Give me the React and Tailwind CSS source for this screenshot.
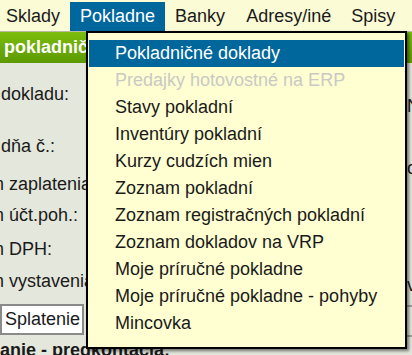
import React from 'react';

const topMenu = [
  { label: 'Sklady', cls: 'ml-[6px] mr-[10px]' },
  { label: 'Pokladne', cls: 'px-[10px] bg-[#00679c] text-white', active: true },
  { label: 'Banky', cls: 'ml-[10px]' },
  { label: 'Adresy/iné', cls: 'ml-[21px]' },
  { label: 'Spisy', cls: 'ml-[20px]' },
];

const dropItems = [
  { label: 'Pokladničné doklady', active: true },
  { label: 'Predajky hotovostné na ERP', disabled: true },
  { label: 'Stavy pokladní' },
  { label: 'Inventúry pokladní' },
  { label: 'Kurzy cudzích mien' },
  { label: 'Zoznam pokladní' },
  { label: 'Zoznam registračných pokladní' },
  { label: 'Zoznam dokladov na VRP' },
  { label: 'Moje príručné pokladne' },
  { label: 'Moje príručné pokladne - pohyby' },
  { label: 'Mincovka' },
];

const FormRow = ({ label, shift, right, rightShift, h }) => (
  <div className={`flex items-center justify-between ${h}`}>
    <span className={`whitespace-nowrap ${shift}`}>{label}</span>
    <span className={`relative w-[5px] overflow-hidden whitespace-nowrap ${rightShift || ''}`}>{right}</span>
  </div>
);

const App = () => {
  return (
    <div className="relative w-[412px] h-[355px] overflow-hidden bg-[#e4e7dc] text-[18px] text-[#1a1a1a] font-['Liberation_Sans',Arial,sans-serif]">
      {/* top menu */}
      <div className="flex h-[32px] items-stretch bg-[#fbfbd6] border-b border-[#b9b9a6] pt-[2px]">
        {topMenu.map((item) => (
          <div key={item.label} className={`flex items-center ${item.cls}`}>
            {item.label}
          </div>
        ))}
      </div>

      {/* green title bar */}
      <div className="h-[31px] flex items-center pl-[4px] bg-gradient-to-b from-[#7cbd0e] to-[#5c9a00] text-white font-bold">
        pokladničné doklady
      </div>

      {/* form */}
      <div className="flex flex-col pt-[5px]">
        <FormRow h="h-[52px]" label="dokladu:" shift="ml-[1px]" right="N" rightShift="top-[12px]" />
        <FormRow h="h-[52px]" label="dňa č.:" shift="ml-[1px]" right="o" rightShift="top-[22px]" />
        <FormRow h="h-[24px]" label="m zaplatenia" shift="-ml-[11px]" right="" />
        <FormRow h="h-[38px]" label="m účt.poh.:" shift="-ml-[11px]" right="" />
        <FormRow h="h-[30px]" label="m DPH:" shift="-ml-[11px]" right="" />
        <FormRow h="h-[34px]" label="m vystavenia" shift="-ml-[11px]" right="v" rightShift="top-[4px]" />
        <div className="flex items-start h-[34px] mt-[6px]">
          <div className="w-[84px] h-[31px] bg-white border-2 border-[#8a8a8a] pl-[3px] flex items-center">
            Splatenie
          </div>
          <div className="ml-auto w-[6px] h-[32px] mt-[1px] border-y-2 border-[#a0a0a0]" />
        </div>
        <div className="font-bold whitespace-nowrap mt-[2px] leading-[20px]">anie - predkontácia:</div>
      </div>

      {/* dropdown */}
      <div className="absolute left-[86px] top-[31px] w-[321px] h-[318px] bg-[#ffffd2] border-2 border-black shadow-[2px_2px_3px_rgba(0,0,0,0.5)] pt-[7px] px-[1px]">
        {dropItems.map((it) => (
          <div
            key={it.label}
            className={`h-[27px] flex items-center pl-[26px] whitespace-nowrap ${
              it.active ? 'bg-[#00679c] text-white' : it.disabled ? 'text-[#c9c9c4]' : 'text-[#1a1a1a]'
            }`}
          >
            {it.label}
          </div>
        ))}
      </div>
    </div>
  );
};

export default App;
